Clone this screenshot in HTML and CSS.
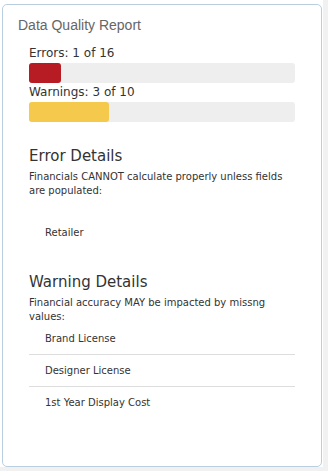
FILE: index.html
```html
<!DOCTYPE html>
<html lang="en">
<head>
  <meta charset="UTF-8">
  <meta name="viewport" content="width=device-width, initial-scale=1.0">
  <title>Data Quality Report</title>
  <link rel="stylesheet" href="styles.css">
</head>
<body>
  <div class="card">
    <h2 class="card-title">Data Quality Report</h2>

    <div class="summary">
      <div class="bar-label">Errors: 1 of 16</div>
      <div class="bar-track">
        <div class="bar-fill error" style="width: 32px"></div>
      </div>

      <div class="bar-label">Warnings: 3 of 10</div>
      <div class="bar-track">
        <div class="bar-fill warning" style="width: 30%"></div>
      </div>
    </div>

    <div class="details error-details">
      <h3>Error Details</h3>
      <p>Financials CANNOT calculate properly unless fields are populated:</p>
      <ul class="field-list">
        <li>Retailer</li>
      </ul>
    </div>

    <div class="details warning-details">
      <h3>Warning Details</h3>
      <p>Financial accuracy MAY be impacted by missng values:</p>
      <ul class="field-list">
        <li>Brand License</li>
        <li>Designer License</li>
        <li>1st Year Display Cost</li>
      </ul>
    </div>
  </div>
</body>
</html>
```

FILE: styles.css
```css
html {
  background-color: #f1f1f1;
}
body {
  font-family: 'DejaVu Sans', Verdana, sans-serif;
  color: #333;
  background-color: #fff;
  margin: 0;
  padding: 4px 0 0 2px;
  width: 321px;
  height: 463px;
}
.card {
  box-sizing: border-box;
  width: 320px;
  height: 463px;
  border: 1px solid #b9cfe0;
  border-radius: 5px;
  padding: 10px 15px;
  background: #fff;
}
.card-title {
  font-family: 'Liberation Sans', Arial, sans-serif;
  font-weight: normal;
  font-size: 14px;
  line-height: 20px;
  color: #666;
  margin: 0;
}
.summary {
  margin: 9px 11px 0;
}
.bar-label {
  font-size: 12px;
  line-height: 18px;
}
.bar-track {
  height: 20px;
  background: #eeeeee;
  border-radius: 3px;
  margin-top: 1px;
}
.bar-fill {
  height: 100%;
  border-radius: 3px;
}
.bar-fill.error {
  background: #b71c24;
}
.bar-fill.warning {
  background: #f5c94c;
}
.details {
  margin: 0 11px;
}
.details h3 {
  font-weight: normal;
  font-size: 15px;
  line-height: 20px;
  margin: 0;
}
.details p {
  font-size: 10px;
  line-height: 14px;
  margin: 4px 0 0;
}
.error-details {
  margin-top: 24px;
}
.warning-details {
  margin-top: 24px;
}
.field-list {
  list-style: none;
  margin: -1px 0 0;
  padding: 0;
}
.error-details .field-list {
  margin-top: 19px;
}
.field-list li {
  font-size: 10px;
  line-height: 16px;
  padding: 8px 16px 7px;
  border-bottom: 1px solid #dddddd;
}
.field-list li:last-child {
  border-bottom: none;
}
```
